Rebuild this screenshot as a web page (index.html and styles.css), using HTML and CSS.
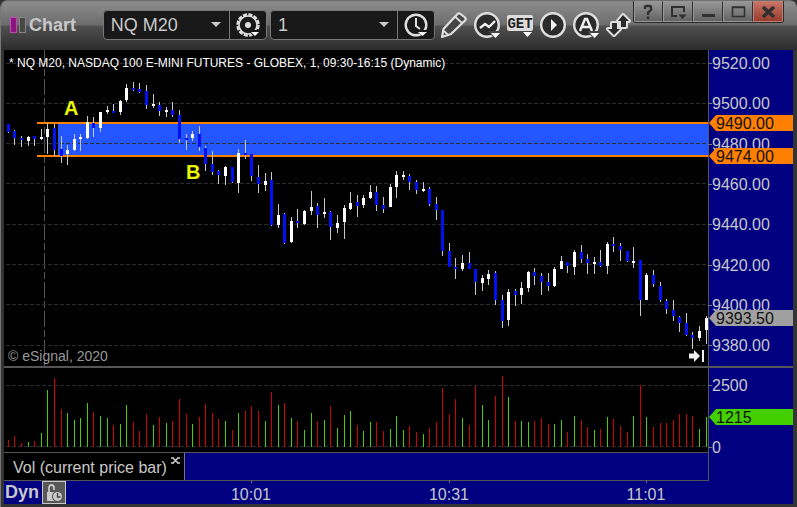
FILE: index.html
```
<!DOCTYPE html>
<html lang="en">
<head>
    <meta charset="UTF-8">
    <meta name="viewport" content="width=device-width, initial-scale=1.0">
    <title>Chart</title>
    <link rel="stylesheet" href="styles.css">
</head>
<body>
    <div class="window">
        <!-- Title bar -->
        <header class="titlebar">
            <svg class="logo" width="17" height="16" viewBox="0 0 17 16">
                <rect x="0.5" y="0.5" width="6" height="15" fill="#8c1480" stroke="#c04cb4"/>
                <rect x="9.5" y="0.5" width="6" height="15" fill="#484848" stroke="#858585"/>
            </svg>
            <h1 class="title">Chart</h1>

            <div class="combo combo-symbol">
                <select class="combo-select" aria-label="Symbol">
                    <option>NQ M20</option>
                </select>
                <svg class="combo-arrow" width="10" height="5" viewBox="0 0 10 5">
                    <path d="M0 0h10L5 5z" fill="#c8c8c8"/>
                </svg>
                <button class="combo-btn" aria-label="Settings">
                    <svg width="26" height="26" viewBox="0 0 26 26">
                        <circle cx="13" cy="13" r="10.500" fill="none" stroke="#dedede" stroke-width="2.400" stroke-dasharray="4.200 1.300"/>
                        <circle cx="13" cy="13" r="9" fill="none" stroke="#dedede" stroke-width="1.600"/>
                        <circle cx="13" cy="13" r="3" fill="#dedede"/>
                        <path d="M13 18h13v1l-6 7z" fill="#181818"/>
                        <path d="M16 20h8l-4 4z" fill="#fff"/>
                    </svg>
                </button>
            </div>

            <div class="combo combo-interval">
                <select class="combo-select" aria-label="Interval">
                    <option>1</option>
                </select>
                <svg class="combo-arrow" width="10" height="5" viewBox="0 0 10 5">
                    <path d="M0 0h10L5 5z" fill="#c8c8c8"/>
                </svg>
                <button class="combo-btn" aria-label="Time template">
                    <svg width="26" height="26" viewBox="0 0 26 26">
                        <circle cx="13" cy="13" r="10.300" fill="none" stroke="#dedede" stroke-width="2.400"/>
                        <path d="M13 6v8l4 3" fill="none" stroke="#dedede" stroke-width="2"/>
                        <path d="M13 18h13l-6 7z" fill="#181818"/>
                        <path d="M15 20h9l-4.500 4z" fill="#fff"/>
                    </svg>
                </button>
            </div>

            <nav class="tools">
                <button class="tool" aria-label="Line tools">
                    <svg width="28" height="28" viewBox="0 0 28 28">
                        <path d="M2 26l1.500-8L17.500 3q1.500-1.500 3 0l4.500 3.500q1.500 1.500 0 3L11 23z" fill="#444" stroke="#e0e0e0" stroke-width="2.200" stroke-linejoin="round"/>
                        <path d="M15 5.500l7 6.500M4 20l4 4" stroke="#e0e0e0" stroke-width="1.800"/>
                    </svg>
                </button>
                <button class="tool" aria-label="Studies">
                    <svg width="28" height="28" viewBox="0 0 28 28">
                        <circle cx="14" cy="14" r="11.800" fill="#2b2b2b" stroke="#dedede" stroke-width="2.400"/>
                        <path d="M7 17l5-4 4 3 6-6" fill="none" stroke="#f4f4f4" stroke-width="2.400"/>
                        <path d="M15 20h13l-6 8z" fill="#444"/>
                        <path d="M18 22h9l-4.500 5z" fill="#fff"/>
                    </svg>
                </button>
                <button class="tool" aria-label="Get studies">
                    <svg width="28" height="28" viewBox="0 0 28 28">
                        <rect x="1" y="4" width="26" height="16" rx="2" fill="#dcdcdc"/>
                        <text class="get-text" x="14" y="17" text-anchor="middle">GET</text>
                        <path d="M15 20h13l-6 7z" fill="#444"/>
                        <path d="M17 21h9l-4.500 5z" fill="#fff"/>
                    </svg>
                </button>
                <button class="tool" aria-label="Playback">
                    <svg width="28" height="28" viewBox="0 0 28 28">
                        <circle cx="14" cy="14" r="11.800" fill="#2b2b2b" stroke="#dedede" stroke-width="2.400"/>
                        <path d="M12 8v12l6-6z" fill="#f0f0f0"/>
                    </svg>
                </button>
                <button class="tool" aria-label="Alerts">
                    <svg width="28" height="28" viewBox="0 0 28 28">
                        <circle cx="14" cy="14" r="11.800" fill="#2b2b2b" stroke="#dedede" stroke-width="2.400"/>
                        <path d="M8 20l5-12h2l5 12M10 16h8" fill="none" stroke="#f0f0f0" stroke-width="2.400"/>
                        <path d="M15 20h13l-6 8z" fill="#444"/>
                        <path d="M18 22h9l-4.500 5z" fill="#fff"/>
                    </svg>
                </button>
                <button class="tool" aria-label="Trade">
                    <svg width="28" height="28" viewBox="0 0 28 28">
                        <g stroke="#dedede" stroke-width="4" stroke-linejoin="round">
                            <path d="M18 4l6 6h-3v6h-5v-6h-3z"/>
                            <path d="M7 12h5v6h3l-6 6-6-6h4z"/>
                        </g>
                        <g fill="#2b2b2b">
                            <path d="M18 4l6 6h-3v6h-5v-6h-3z"/>
                            <path d="M7 12h5v6h3l-6 6-6-6h4z"/>
                        </g>
                    </svg>
                </button>
            </nav>

            <div class="window-btns">
                <button class="window-btn" aria-label="Help">
                    <svg width="17" height="16" viewBox="0 0 17 16">
                        <path d="M5 5V3.500q0-1.500 1.500-1.500h3q1.500 0 1.500 1.500V6L8 8.500V11M8 12.500v2.500" fill="none" stroke="#303030" stroke-width="2.400"/>
                    </svg>
                </button>
                <button class="window-btn" aria-label="Dock">
                    <svg width="17" height="16" viewBox="0 0 17 16">
                        <path d="M7 12H2V3h12v5" fill="none" stroke="#303030" stroke-width="2"/>
                        <path d="M8.500 10.500h8l-4 4.500z" fill="#303030"/>
                    </svg>
                </button>
                <button class="window-btn" aria-label="Minimize">
                    <svg width="17" height="16" viewBox="0 0 17 16">
                        <path d="M2 11.500h13" stroke="#303030" stroke-width="3"/>
                    </svg>
                </button>
                <button class="window-btn" aria-label="Maximize">
                    <svg width="17" height="16" viewBox="0 0 17 16">
                        <path d="M2.500 3.500h12v9h-12zM2 3h13" fill="none" stroke="#303030" stroke-width="1.600"/>
                    </svg>
                </button>
                <button class="window-btn close" aria-label="Close">
                    <svg width="17" height="16" viewBox="0 0 17 16">
                        <path d="M3 3l11 10M14 3L3 13" stroke="#303030" stroke-width="3.600"/>
                    </svg>
                </button>
            </div>
        </header>

        <!-- Price pane -->
        <main class="workspace">
            <section class="pane price-pane">
                <svg class="plot" id="price-plot"></svg>
                <p class="legend">* NQ M20, NASDAQ 100 E-MINI FUTURES - GLOBEX, 1, 09:30-16:15 (Dynamic)</p>
                <p class="copyright">© eSignal, 2020</p>
                <button class="go-last" aria-label="Go to last bar">
                    <svg width="16" height="14" viewBox="0 0 16 14">
                        <path d="M0 4.500h5V1l6 6-6 6V9.500H0z" fill="#f0f0f0"/>
                        <rect x="13" y="1" width="2" height="12" fill="#f0f0f0"/>
                    </svg>
                </button>
            </section>
            <svg class="axis price-axis" id="price-axis"></svg>

            <!-- Volume pane -->
            <section class="pane volume-pane">
                <svg class="plot" id="volume-plot"></svg>
            </section>
            <svg class="axis volume-axis" id="volume-axis"></svg>

            <div class="tabs">
                <div class="tab">
                    <span>Vol (current price bar)</span>
                    <button class="tab-close" aria-label="Close study">
                        <svg width="9" height="7" viewBox="0 0 9 7">
                            <path d="M1.500 0.500l6 6M7.500 0.500l-6 6M0 1h3M6 1h3M0 6h3M6 6h3" stroke="#c8c8c8" stroke-width="1.600"/>
                        </svg>
                    </button>
                </div>
            </div>
            <div class="corner"></div>

            <footer class="timebar">
                <svg class="plot" id="time-axis"></svg>
                <span class="mode">Dyn</span>
                <button class="lock-btn" aria-label="Lock time template">
                    <svg width="20" height="20" viewBox="0 0 20 20">
                        <path d="M5 9V5q0-3 2.500-3T10 5v2" fill="none" stroke="#c8c8c8" stroke-width="1.800"/>
                        <path d="M3 9h7v9H3z" fill="#c8c8c8"/>
                        <circle cx="13.500" cy="13.500" r="5.500" fill="#585858"/>
                        <circle cx="13.500" cy="13.500" r="4.500" fill="#c8c8c8"/>
                        <path d="M13.500 10v4h3" fill="none" stroke="#444" stroke-width="1.400"/>
                    </svg>
                </button>
            </footer>
        </main>
    </div>

    <script src="script.js"></script>
</body>
</html>
```
FILE: styles.css
```
* {
    box-sizing: border-box;
}

body {
    margin: 0;
    background-color: #333;
    font-family: "Liberation Sans", Arial, sans-serif;
    color: #c8c8c8;
}

h1, p {
    margin: 0;
}

button, select {
    margin: 0;
    padding: 0;
    border: none;
    background: none;
    color: inherit;
    font-family: inherit;
    cursor: pointer;
}

svg {
    display: block;
}

.window {
    display: flex;
    flex-direction: column;
    min-height: 100vh;
    background-color: #343434;
    border-left: 1px solid #777;
    border-bottom: 1px solid #777;
    border-radius: 8px 8px 0 0;
    overflow: hidden;
}

/* Title bar */
.titlebar {
    display: flex;
    align-items: center;
    height: 50px;
    padding-left: 9px;
    background: linear-gradient(#666 0, #8c8c8c 2px, #6c6c6c 25px, #505050 26px, #2c2c2c 50px);
}

.title {
    margin: 0 0 0 2px;
    width: 74px;
    font-size: 18px;
    line-height: 20px;
}

.combo {
    display: flex;
    position: relative;
    width: 165px;
    height: 30px;
    margin-right: 3px;
    border: 1px solid #777;
    border-radius: 4px;
    background-color: #181818;
}

.combo-select {
    flex: 1;
    min-width: 0;
    padding-left: 7px;
    appearance: none;
    font-size: 18px;
}

.combo-arrow {
    position: absolute;
    top: 11px;
    right: 45px;
    pointer-events: none;
}

.combo-btn {
    display: flex;
    align-items: center;
    justify-content: center;
    width: 37px;
    border-left: 1px solid #777;
}

.tools {
    display: flex;
    gap: 5px;
    margin-left: 2px;
}

.get-text {
    font-size: 14px;
    font-weight: bold;
    font-family: "Liberation Mono", "Courier New", monospace;
    fill: #222;
}

.window-btns {
    display: flex;
    align-self: flex-start;
    margin: 1px 13px 0 auto;
    border: 1px solid #2c2c2c;
    border-top: none;
    border-radius: 0 0 3px 3px;
    overflow: hidden;
}

.window-btn {
    display: flex;
    align-items: center;
    justify-content: center;
    width: 30px;
    height: 21px;
    border: 1px solid #969696;
    border-right-color: #333;
    background: linear-gradient(#969696, #646464);
}

.window-btn.close {
    border-color: #c08074;
    background: linear-gradient(#c87466, #983c2c);
}

/* Panes */
.workspace {
    flex: 1;
    display: grid;
    grid-template-columns: 1fr 85px;
    grid-template-rows: 316px 86px auto 1fr;
    margin: 0 4px 3px 3px;
    background-color: #000080;
}

.pane {
    position: relative;
    background-color: #000;
    overflow: hidden;
}

.plot, .axis {
    width: 100%;
    height: 100%;
}

.axis {
    font-size: 16px;
    fill: #c8c8c8;
    overflow: visible;
}

.volume-pane, .volume-axis {
    border-top: 2px solid #555;
}

.legend {
    position: absolute;
    top: 5px;
    left: 5px;
    font-size: 12px;
    line-height: 16px;
    color: #fff;
    white-space: nowrap;
}

.copyright {
    position: absolute;
    bottom: 2px;
    left: 4px;
    font-size: 14px;
    line-height: 16px;
    color: #999;
}

.go-last {
    position: absolute;
    right: 3px;
    bottom: 3px;
}

.note {
    font-size: 20px;
    font-weight: bold;
    fill: #e8f800;
}

.tabs {
    display: flex;
    height: 29px;
    border-top: 1px solid #555;
    border-bottom: 1px solid #555;
}

.corner {
    border-left: 1px solid #555;
}

.tab {
    display: flex;
    align-items: center;
    gap: 4px;
    padding: 2px 4px 0 9px;
    border-right: 1px solid #777;
    background-color: #000;
    font-size: 16px;
    white-space: nowrap;
}

.tab-close {
    align-self: flex-start;
    margin-top: 2px;
}

/* Time bar */
.timebar {
    display: flex;
    align-items: center;
    grid-column: 1 / 3;
    position: relative;
    padding-left: 1px;
    font-size: 16px;
}

.timebar .plot {
    position: absolute;
    top: 0;
    left: 0;
    fill: #c8c8c8;
}

.mode {
    width: 37px;
    font-size: 18px;
    font-weight: bold;
    position: relative;
}

.lock-btn {
    position: relative;
    display: flex;
    align-items: center;
    justify-content: center;
    width: 24px;
    height: 23px;
    border: 1px solid #c8c8c8;
    background-color: #585858;
}
```
FILE: script.js
```
// high, body top, body bottom, low (pixels from the top of the pane), 1 = up bar
const bars = [
    [74, 74, 82, 83, 0], [80, 81, 88, 95, 0], [86, 88, 90, 97, 0], [86, 87, 91, 96, 1],
    [86, 86, 89, 96, 0], [79, 87, 89, 90, 1], [73, 79, 87, 104, 1], [74, 78, 100, 106, 0],
    [86, 99, 106, 113, 0], [95, 100, 104, 115, 1], [84, 89, 100, 101, 1], [84, 87, 89, 101, 1],
    [66, 72, 88, 89, 1], [67, 73, 78, 87, 0], [62, 62, 78, 82, 1], [56, 60, 62, 64, 1],
    [54, 61, 63, 63, 0], [50, 51, 62, 65, 1], [34, 38, 50, 52, 1], [32, 38, 40, 41, 0],
    [33, 39, 42, 43, 0], [35, 41, 55, 59, 0], [44, 54, 56, 58, 1], [52, 55, 61, 66, 0],
    [57, 60, 62, 67, 1], [52, 60, 65, 67, 0], [60, 65, 89, 93, 0], [84, 88, 90, 100, 0],
    [81, 84, 88, 91, 1], [76, 84, 97, 101, 0], [96, 98, 114, 121, 0], [101, 114, 122, 125, 0],
    [120, 121, 125, 134, 0], [116, 117, 126, 135, 1], [117, 117, 132, 133, 0], [99, 103, 133, 143, 1],
    [90, 103, 105, 109, 0], [104, 104, 126, 131, 0], [115, 127, 134, 143, 0], [123, 131, 135, 141, 1],
    [122, 130, 175, 176, 0], [154, 165, 175, 178, 1], [163, 164, 193, 194, 0], [167, 171, 192, 193, 1],
    [159, 171, 173, 178, 0], [160, 161, 174, 175, 1], [141, 157, 161, 165, 1], [153, 156, 165, 178, 0],
    [148, 162, 164, 168, 1], [161, 162, 177, 190, 0], [165, 173, 178, 183, 1], [155, 158, 172, 189, 1],
    [142, 153, 159, 160, 1], [145, 152, 156, 167, 0], [145, 148, 155, 158, 1], [135, 142, 148, 149, 1],
    [136, 142, 155, 161, 0], [147, 155, 159, 163, 0], [134, 137, 157, 157, 1], [121, 125, 137, 148, 1],
    [121, 125, 127, 130, 1], [124, 126, 132, 140, 0], [130, 132, 140, 144, 0], [132, 139, 141, 142, 1],
    [137, 139, 154, 156, 0], [147, 154, 160, 170, 0], [160, 160, 201, 206, 0], [193, 201, 217, 217, 0],
    [208, 217, 219, 229, 0], [205, 213, 219, 221, 1], [202, 213, 219, 219, 0], [219, 219, 232, 245, 0],
    [225, 228, 233, 241, 1], [220, 224, 229, 235, 1], [221, 223, 250, 255, 0], [245, 250, 271, 278, 0],
    [239, 242, 270, 276, 1], [239, 241, 245, 256, 0], [232, 238, 245, 254, 1], [221, 222, 238, 242, 1],
    [218, 222, 226, 235, 0], [223, 226, 232, 245, 0], [223, 232, 236, 241, 0], [217, 219, 236, 237, 1],
    [206, 211, 219, 219, 1], [212, 212, 216, 223, 0], [200, 202, 217, 225, 1], [195, 202, 209, 213, 0],
    [204, 209, 213, 224, 0], [207, 212, 214, 224, 1], [200, 212, 216, 217, 0], [192, 194, 216, 224, 1],
    [187, 194, 196, 202, 0], [193, 196, 200, 211, 0], [201, 201, 211, 212, 0], [197, 211, 213, 218, 1],
    [210, 210, 250, 266, 0], [223, 225, 250, 250, 1], [220, 225, 234, 237, 0], [232, 236, 250, 252, 0],
    [249, 251, 259, 264, 0], [250, 260, 266, 271, 0], [266, 267, 273, 282, 0], [263, 273, 285, 286, 0],
    [282, 285, 288, 299, 0], [276, 281, 288, 291, 1], [266, 268, 280, 294, 1]
];

// volume bar heights, negative = down bar
const volume = [
    -7, -11, -4, 5, -6, 14, 57, -69, -38, 34, 27, 29, 44, -35, 31, 29, -22, 23, 42, -25,
    -16, -33, 22, -30, 24, -26, -48, -33, 23, -30, -43, -34, -28, 26, -17, 34, -36, -41, -36, 26,
    -55, 42, -44, 29, -26, 17, 34, -26, 27, -41, 19, 32, 36, -22, 16, 25, -25, -16, 18, 31,
    17, -21, -15, 13, -19, -25, -59, -33, -48, 29, -22, -61, 42, 27, -51, -71, 50, -26, 26, 25,
    -26, -29, -23, 23, 27, -15, 31, -27, -20, 17, -18, 30, -28, -21, -15, 31, -62, 30, -20, -24,
    -24, -27, -33, -33, -31, 18, 30
];

const barX = (i) => Math.round(3.845 + i * 6.5825);

const rect = (x, y, w, h, fill) =>
    `<rect x="${x}" y="${y}" width="${w}" height="${h}" fill="${fill}"/>`;

const gridLine = (y) =>
    `<line x1="0" x2="100%" y1="${y + 0.5}" y2="${y + 0.5}" stroke="#2c2c2c" stroke-dasharray="4 2" stroke-dashoffset="4"/>`;

const axisLabel = (y, text) =>
    rect(0, y, 4, 1, '#777') + `<text x="4" y="${y + 6}">${text}</text>`;

const axisTag = (y, text, color) =>
    `<path d="M1 ${y}l7-8h77v16H8z" fill="${color}"/><text x="8" y="${y + 6}" fill="#111">${text}</text>`;

const drawPrice = () => {
    let svg = `<line x1="40.5" x2="40.5" y1="0" y2="100%" stroke="#555" stroke-dasharray="16 3 7 3"/>`;
    svg += `<rect x="54" y="74" width="100%" height="31" fill="#2456ff"/>`;
    svg += [13, 53, 93, 133, 174, 214, 254, 295].map(gridLine).join('');
    svg += `<rect x="33" y="72" width="100%" height="2" fill="#ff8000"/>`;
    svg += `<rect x="33" y="105" width="100%" height="2" fill="#ff8000"/>`;
    bars.forEach(([high, top, bottom, low, up], i) => {
        const x = barX(i);
        svg += rect(x, high, 1, low - high, '#c8c8c8');
        svg += rect(x - 1, top, 3, bottom - top, up ? '#fff' : '#0010f0');
    });
    svg += `<text class="note" x="60" y="65">A</text><text class="note" x="182" y="129">B</text>`;
    document.getElementById('price-plot').innerHTML = svg;
};

const drawPriceAxis = () => {
    let svg = rect(0, 0, 1, '100%', '#555');
    [[13, 9520], [53, 9500], [94, 9480], [134, 9460], [174, 9440], [215, 9420], [255, 9400], [295, 9380]]
        .forEach(([y, price]) => { svg += axisLabel(y, price.toFixed(2)); });
    svg += axisTag(73, '9490.00', '#ff8000');
    svg += axisTag(106, '9474.00', '#ff8000');
    svg += axisTag(268, '9393.50', '#a0a0a0');
    document.getElementById('price-axis').innerHTML = svg;
};

const drawVolume = () => {
    let svg = gridLine(17) + gridLine(78);
    volume.forEach((v, i) => {
        const h = Math.abs(v);
        svg += rect(barX(i), 79 - h, 1, h, v > 0 ? '#44d000' : '#d00000');
    });
    document.getElementById('volume-plot').innerHTML = svg;
    document.getElementById('volume-axis').innerHTML =
        rect(0, 0, 1, '100%', '#555') + axisLabel(17, '2500') + axisLabel(79, '0') + axisTag(49, '1215', '#44d000');
};

const drawTime = () => {
    const ticks = [[37, '10:01'], [67, '10:31'], [97, '11:01']];
    document.getElementById('time-axis').innerHTML = ticks.map(([i, label]) =>
        rect(barX(i), 0, 1, 2, '#777') + `<text x="${barX(i)}" y="19" text-anchor="middle">${label}</text>`
    ).join('');
};

drawPrice();
drawPriceAxis();
drawVolume();
drawTime();
```
